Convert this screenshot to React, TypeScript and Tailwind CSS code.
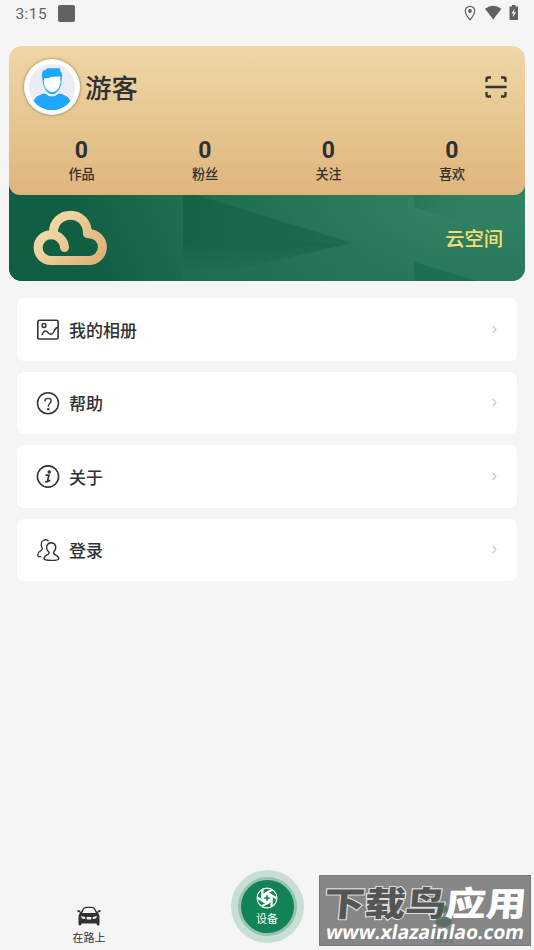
import React from "react";

const stats = ["作品", "粉丝", "关注", "喜欢"];

function Avatar() {
  return (
    <svg className="h-[46px] w-[46px]" viewBox="0 0 46 46">
      <circle cx="23" cy="23" r="23" fill="#ebedf3" />
      <path d="M4.500 37C7.500 31.500 12 30 16 29.500Q23 35.500 30 29.500C34 30 38.500 31.500 41.500 37A23 23 0 0 1 4.500 37Z" fill="#1ea7ff" />
      <path d="M13 9.500L14 6.500L16.500 6L18 4.200H31L31.500 7.500Q33.500 9 33 13L32 21Q30 27 26.500 29.200Q23.200 31 20 29.200Q16 26.500 14.500 21L13.300 15Q12.500 12 13 9.500Z" fill="#1ea7ff" />
      <path d="M15 14.500Q20 14.500 22.500 12.800L31.300 12.500L31.600 18Q31 23 28 26Q23.200 30.500 18.500 26Q15 23 14.900 18Z" fill="white" />
    </svg>
  );
}

function MenuIcon({ kind }: { kind: string }) {
  return (
    <svg className="h-6 w-6 shrink-0" viewBox="0 0 24 24" fill="none" stroke="#333" strokeWidth="1.5" strokeLinecap="round" strokeLinejoin="round">
      {kind === "album" && (
        <>
          <rect x="1.800" y="3.200" width="20.300" height="18.800" rx="1.700" strokeWidth="1.600" />
          <circle cx="8" cy="8.500" r="1.900" />
          <path d="M6 17.500Q9 11.500 12 15.500Q15.500 19.500 18 14.500Q19.500 10.500 21.500 10.500" />
        </>
      )}
      {kind === "help" && (
        <>
          <circle cx="12" cy="12.200" r="10.500" />
          <path d="M8.900 9.900C9 6.700 15 6.400 15.200 10C15.300 12.200 12.300 12.400 12.300 15.200" strokeWidth="1.300" />
          <circle cx="12.300" cy="18.200" r=".5" fill="#333" />
        </>
      )}
      {kind === "about" && (
        <>
          <circle cx="12" cy="12.500" r="10.600" strokeWidth="1.600" />
          <circle cx="13.200" cy="8" r="1" fill="#333" />
          <path d="M10.300 11.200H12.900L11.400 17.400Q12.500 17.700 13.600 16.500" strokeWidth="1.700" />
          <path d="M9.700 17.700H11.400" />
        </>
      )}
      {kind === "login" && (
        <>
          <path d="M12.200 2.800C9.200.5 5.200 2.500 5.200 6.300C5.200 8.500 6.300 9.500 6.300 10.800C6.200 12.800 2 13.100 1.800 16.600C1.700 18.500 2.500 18.600 4.800 18.700" strokeWidth="1.300" />
          <path d="M12.800 14C8.500 9.700 11.200 4.700 15.300 4.700C19.500 4.700 21.500 9.700 17.700 14C16.200 17.200 22.700 16.200 22.700 20.700Q22.700 22.400 15.300 22.400Q8 22.400 8 20.700C8 16.200 14.500 17.200 12.800 14Z" strokeWidth="1.400" />
        </>
      )}
    </svg>
  );
}

const rows = [
  { kind: "album", label: "我的相册" },
  { kind: "help", label: "帮助" },
  { kind: "about", label: "关于" },
  { kind: "login", label: "登录" },
];

function Cloud() {
  return (
    <svg className="h-[56px] w-[76px]" viewBox="0 0 76 56" fill="none" stroke="url(#cloudGold)" strokeWidth="9" strokeLinecap="round" strokeLinejoin="round">
      <defs>
        <linearGradient id="cloudGold" x1="8" y1="8" x2="64" y2="54" gradientUnits="userSpaceOnUse">
          <stop stopColor="#f5dfb0" />
          <stop offset="1" stopColor="#dfb275" />
        </linearGradient>
      </defs>
      <path d="M31.500 37.500C31 30.500 25.500 24.700 18 24.700A12.900 12.900 0 0 0 18 50.500H56A13.400 13.400 0 0 0 56 23.700L54.500 23.500C54.500 12.500 47 5.200 37.500 5.200C28 5.200 20.500 12.500 20.500 22" />
    </svg>
  );
}

function Banner() {
  return (
    <svg className="absolute inset-0 h-full w-full" viewBox="0 0 516 96" preserveAspectRatio="none">
      <defs>
        <linearGradient id="left" x1="80" y1="70" x2="200" y2="15" gradientUnits="userSpaceOnUse">
          <stop stopColor="#115f42" /><stop offset="1" stopColor="#207454" />
        </linearGradient>
        <linearGradient id="right" x1="190" y1="96" x2="400" y2="0" gradientUnits="userSpaceOnUse">
          <stop stopColor="#186a4c" /><stop offset="1" stopColor="#2f8161" />
        </linearGradient>
        <linearGradient id="ray" x1="180" y1="50" x2="350" y2="50" gradientUnits="userSpaceOnUse">
          <stop stopColor="#156446" /><stop offset="1" stopColor="#1b6e4e" />
        </linearGradient>
        <linearGradient id="rayFade" x1="0" y1="56" x2="0" y2="90" gradientUnits="userSpaceOnUse">
          <stop stopColor="#125f42" stopOpacity=".65" /><stop offset="1" stopColor="#125f42" stopOpacity="0" />
        </linearGradient>
        <linearGradient id="edgeShade" x1="405" y1="0" x2="485" y2="0" gradientUnits="userSpaceOnUse">
          <stop stopColor="#247657" stopOpacity=".85" /><stop offset="1" stopColor="#328465" stopOpacity="0" />
        </linearGradient>
        <linearGradient id="lowerShade" x1="0" y1="35" x2="0" y2="96" gradientUnits="userSpaceOnUse">
          <stop stopColor="#217353" stopOpacity="0" /><stop offset="1" stopColor="#217353" stopOpacity=".6" />
        </linearGradient>
      </defs>
      <path d="M0 0H516V96H0Z" fill="url(#right)" />
      <path d="M174 0H516V96H174Z" fill="url(#lowerShade)" />
      <path d="M0 0H174V96H0Z" fill="url(#left)" />
      <path d="M174 6L344 58H174Z" fill="url(#ray)" />
      <path d="M174 58H344L174 96Z" fill="url(#rayFade)" />
      <path d="M405 0H485V47L405 22Z" fill="url(#edgeShade)" />
      <path d="M405 77L468 96H405Z" fill="#1c704f" />
    </svg>
  );
}

function Car() {
  return (
    <svg className="h-[20px] w-6" viewBox="0 0 24 20">
      <path fill="#303133" d="M5 4Q6.500.8 9 .8H15Q17.500.8 19 4L20.300 6.300L21 4.500L23.500 4V5.700L20.800 6.700Q22.500 8.500 22.500 10.500V18Q22.500 19.500 21 19.500Q19.500 19.500 19.500 17.500H4.500Q4.500 19.500 3 19.500Q1.500 19.500 1.500 18V10.500Q1.500 8.500 3.200 6.700L.5 5.700V4L3 4.500L3.700 6.300Z" />
      <path fill="#f5f5f5" d="M6.500 4Q7.500 2 9 2H15Q16.500 2 17.500 4L18.700 7H5.300Z" />
      <path fill="#f5f5f5" d="M3.800 10L8 11L8.500 13L5 12.500ZM20.200 10L16 11L15.500 13L19 12.500ZM9.500 11H14.500L14 13.500H10Z" />
    </svg>
  );
}

function Aperture() {
  return (
    <svg className="h-[22px] w-[22px]" viewBox="0 0 22 22">
      <circle cx="11" cy="11" r="9.900" fill="none" stroke="white" strokeWidth="1.100" />
      {[0, 60, 120, 180, 240, 300].map((angle) => (
        <path key={angle} transform={`rotate(${angle} 11 11)`} d="M7.500 6.500L14.800 2.200L17.200 3.600L11.500 6.500Z" fill="white" />
      ))}
      <path d="M11 4.500L16.600 7.800V14.200L11 17.500L5.400 14.200V7.800Z" fill="white" />
      <path d="M11 8.200V13.800M8.200 11H13.800" stroke="#118357" strokeWidth="1.700" />
    </svg>
  );
}

export default function App() {
  return (
    <main className="relative flex h-[950px] w-[534px] flex-col overflow-hidden bg-[#f5f5f5] font-['Roboto','Noto_Sans_CJK_SC',sans-serif] text-[#303133]">
      <header className="flex h-[46px] items-start justify-between pt-[4px] pr-[15px] pl-[15.500px] text-[#636363]">
        <div className="flex items-start gap-[11px]">
          <span className="text-[15.500px] leading-[21px] tracking-[0.400px]">3:15</span>
          <i className="mt-[1px] h-[17px] w-[17px] rounded-[2px] bg-[#636363]" />
        </div>
        <svg className="h-[18px] w-[56px]" viewBox="0 0 56 18" fill="#606060">
          <path d="M7 2.300C4 2.300 2.300 4.600 2.300 7C2.300 10.500 7 15.800 7 15.800C7 15.800 11.700 10.500 11.700 7C11.700 4.600 10 2.300 7 2.300Z" fill="none" stroke="#606060" strokeWidth="1.200" />
          <circle cx="7" cy="7" r="1.900" />
          <path d="M22 4.700Q30 -1 38.500 4.700L30.200 15.500Z" />
          <path d="M47 2.500H49V1H52.500V2.500H55V16H46.500V2.500Z" />
          <path d="M51.500 4.500L48.500 9.500H50.500L49.800 13.500L53.200 8.200H51Z" fill="#f5f5f5" />
        </svg>
      </header>

      <section className="relative mx-[9px] h-[235px] shrink-0 overflow-hidden rounded-[13px]">
        <div className="absolute inset-x-0 bottom-0 h-[96px]"><Banner /></div>
        <div className="relative h-[149px] rounded-[11px] bg-linear-to-b from-[#efd7a6] to-[#dfb57c]">
          <div className="flex h-[82px] items-center pl-[15px]">
            <div className="flex h-[56px] w-[56px] items-center justify-center rounded-full bg-white shadow-[0_0_3px_#806b49]"><Avatar /></div>
            <h1 className="ml-[5px] pt-[3px] text-[26.500px] leading-9 font-medium">游客</h1>
            <svg className="mr-[17px] ml-auto h-6 w-6" viewBox="0 0 24 24" fill="none" stroke="#353326" strokeWidth="2.300">
              <path d="M2.500 7V4Q2.500 2.500 4 2.500H7M17 2.500H20Q21.500 2.500 21.500 4V7M21.500 17V20Q21.500 21.500 20 21.500H17M7 21.500H4Q2.500 21.500 2.500 20V17M1.500 12H22.500" />
            </svg>
          </div>
          <div className="grid grid-cols-4 pt-[9px] pr-[11px] pl-[11px]">
            {stats.map((label) => (
              <div key={label} className="flex flex-col items-center">
                <strong className="pr-[1px] text-[23px] leading-[27px] font-bold">0</strong>
                <span className="pr-[0.500px] text-[13.100px] leading-[21px] font-medium">{label}</span>
              </div>
            ))}
          </div>
        </div>
        <div className="relative flex h-[86px] items-center justify-between pr-[22px] pl-[24px]">
          <Cloud />
          <span className="pt-[4px] text-[19.300px] leading-6 font-medium text-[#f9db73]">云空间</span>
        </div>
      </section>

      <nav className="mt-[17px] flex flex-col gap-[11px] px-[17px]">
        {rows.map(({ kind, label }) => (
          <button key={kind} className="flex h-[62.500px] items-center rounded-[7px] bg-white pr-[19px] pl-[19px] text-left">
            <MenuIcon kind={kind} />
            <span className="ml-[9px] pt-[2.500px] text-[17px] leading-6 font-medium">{label}</span>
            <svg className="ml-auto h-[9px] w-[7px]" viewBox="0 0 7 9" fill="none" stroke="#c5c8cd" strokeWidth="1.100"><path d="M1.500 1L5.200 4.500L1.500 8" /></svg>
          </button>
        ))}
      </nav>

      <footer className="mt-auto flex h-[80px] items-start">
        <div className="flex w-[178px] flex-col items-center pt-[36px]">
          <Car />
          <span className="mt-[5px] text-[11px] leading-4">在路上</span>
        </div>
        <div className="flex w-[178px] justify-center">
          <div className="flex h-[73px] w-[73px] items-center justify-center rounded-full bg-[#c8dfd6]">
            <div className="flex h-[59px] w-[59px] flex-col items-center rounded-full border-[3px] border-[#95c4b1] bg-[#118357] pt-[7px] text-white">
              <Aperture />
              <span className="mt-[2.500px] text-[11px] leading-4">设备</span>
            </div>
          </div>
        </div>
      </footer>

      <div className="absolute top-[875px] left-[319px] h-[71px] w-[212px] border border-[#777] bg-[#868686]">
        <svg className="h-full w-full" viewBox="0 0 212 71">
          <g fontFamily="Noto Sans CJK SC" fontWeight="900" fontSize="35">
            <text transform="translate(1 41) skewX(-5) scale(1.200 1)" fill="#555" stroke="#ddd" strokeWidth="2.200" paintOrder="stroke">下载鸟</text>
            <text transform="translate(126 41) skewX(-5) scale(1.190 1)" fill="white">应用</text>
          </g>
          <g opacity=".65" fill="#3f6659">
            <circle cx="125" cy="34" r="4" />
            <path d="M116.500 46Q118 42 125 42Q132 42 133.500 46Q134 52 125 52.500Q116 52 116.500 46Z" />
            <text x="125" y="67.500" fontSize="10.500" textAnchor="middle">我的</text>
          </g>
          <text transform="translate(3 65) skewX(-10)" textLength="204" lengthAdjust="spacingAndGlyphs" fontFamily="Open Sans" fontSize="20" fontWeight="700" fill="white">www.xlazainlao.com</text>
        </svg>
      </div>
    </main>
  );
}
